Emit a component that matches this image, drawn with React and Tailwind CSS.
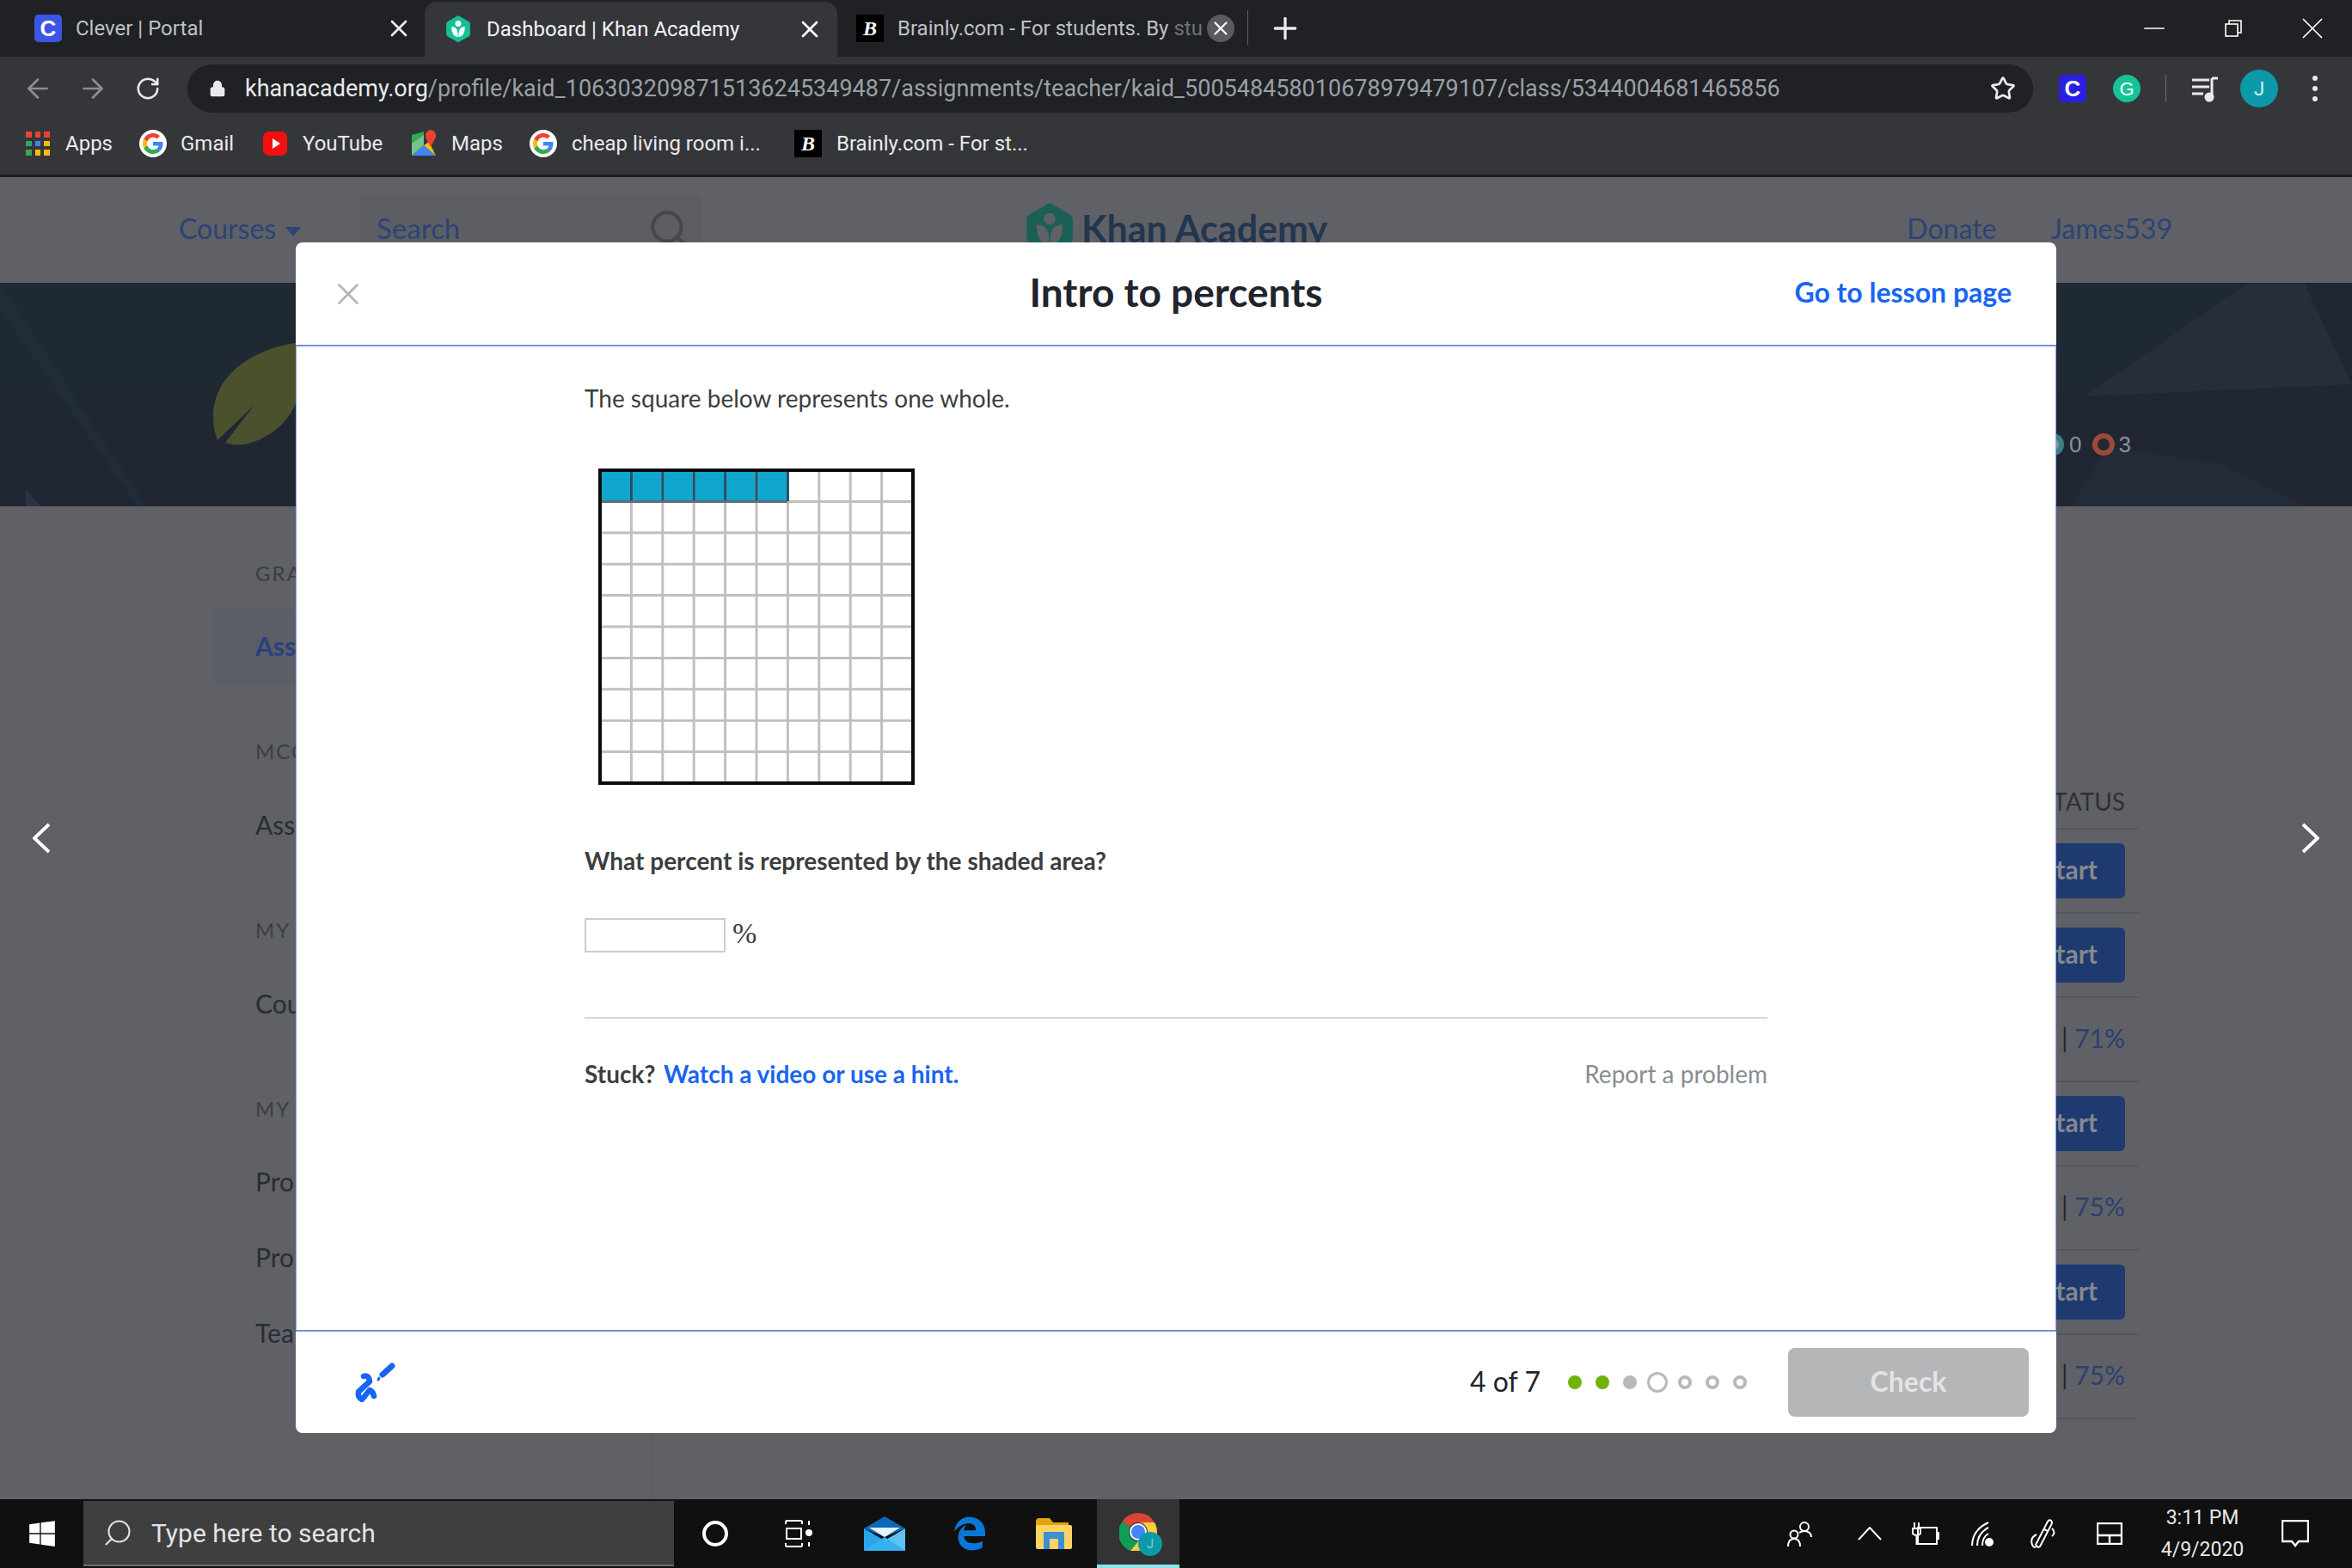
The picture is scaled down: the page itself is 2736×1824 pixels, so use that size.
import { ArrowLeft, ArrowRight, Lock, Minus, Plus, RotateCw, Search, Star, X } from 'lucide-react';
import { FaEdgeLegacy, FaWindows } from 'react-icons/fa';

const UI_FONT = 'font-["Roboto","Liberation_Sans",sans-serif]';

const SIDEBAR = [
    { label: 'MCC', link: 'Ass', gap: 'mt-[45px]' },
    { label: 'MY', link: 'Cou', gap: 'mt-[45px]' },
];

const ROWS = [
    { start: true },
    { start: true },
    { score: '71%' },
    { start: true },
    { score: '75%' },
    { start: true },
    { score: '75%' },
];

const DOTS = ['done', 'done', 'seen', 'current', 'todo', 'todo', 'todo'];

function GoogleIcon({ size = 32 }) {
    return (
        <div className="flex items-center justify-center rounded-full bg-white" style={{ width: size, height: size }}>
            <svg viewBox="0 0 48 48" width={size - 8} height={size - 8}>
                <path fill="#EA4335" d="M24 9.5c3.54 0 6.71 1.22 9.21 3.6l6.85-6.85C35.9 2.38 30.47 0 24 0 14.62 0 6.51 5.38 2.56 13.22l7.98 6.19C12.43 13.72 17.74 9.5 24 9.5z" />
                <path fill="#4285F4" d="M46.98 24.55c0-1.57-.15-3.09-.38-4.55H24v9.02h12.94c-.58 2.96-2.26 5.48-4.78 7.18l7.73 6c4.51-4.18 7.09-10.36 7.09-17.65z" />
                <path fill="#FBBC05" d="M10.53 28.59c-.48-1.45-.76-2.99-.76-4.59s.27-3.14.76-4.59l-7.98-6.19C.92 16.46 0 20.12 0 24c0 3.88.92 7.54 2.56 10.78l7.97-6.19z" />
                <path fill="#34A853" d="M24 48c6.48 0 11.93-2.13 15.89-5.81l-7.73-6c-2.15 1.45-4.92 2.3-8.16 2.3-6.26 0-11.57-4.22-13.47-9.91l-7.98 6.19C6.51 42.62 14.62 48 24 48z" />
            </svg>
        </div>
    );
}

function KhanLogo({ size = 30, color = '#14bf96', leaf = '#ffffff' }) {
    return (
        <svg viewBox="0 0 32 36" width={size} height={size * 1.12}>
            <path fill={color} d="M16 0 L30 8 Q32 9 32 12 L32 24 Q32 27 30 28 L16 36 L2 28 Q0 27 0 24 L0 12 Q0 9 2 8 Z" />
            <path fill={leaf} d="M7 15 Q15 15 15.5 24 L15.5 29 Q7 28 7 15 Z M25 15 Q17 15 16.5 24 L16.5 29 Q25 28 25 15 Z" />
            <circle cx="16" cy="11" r="4" fill={leaf} />
        </svg>
    );
}

function BrainlyIcon() {
    return (
        <div className="flex h-[32px] w-[32px] items-center justify-center bg-black font-['Liberation_Serif',serif] text-[24px] font-bold italic text-white">
            B
        </div>
    );
}

function CleverIcon({ className }) {
    return (
        <div className={`flex h-[32px] w-[32px] items-center justify-center rounded-[5px] font-['Liberation_Sans',sans-serif] text-[26px] font-bold text-white ${className}`}>
            C
        </div>
    );
}

function ChromeLogo() {
    return (
        <div className="relative h-[44px] w-[44px]">
            <svg viewBox="0 0 44 44" width="44" height="44">
                <path fill="#db4437" d="M22 0 A22 22 0 0 1 41 11 L22 11 A11 11 0 0 0 12.5 16.5 L3.5 10 A22 22 0 0 1 22 0 Z" />
                <path fill="#0f9d58" d="M3.5 10 L12.5 16.5 A11 11 0 0 0 22 33 L13 44 A22 22 0 0 1 3.5 10 Z" />
                <path fill="#ffcd40" d="M41 11 A22 22 0 0 1 22 44 L13 44 L22 33 A11 11 0 0 0 22 11 Z" />
                <circle cx="22" cy="22" r="9" fill="#4285f4" stroke="#ffffff" strokeWidth="2" />
            </svg>
            <div className="absolute bottom-[-6px] right-[-6px] flex h-[28px] w-[28px] items-center justify-center rounded-full bg-[#0d9aa8] text-[14px] text-[#7fd4dc]">
                J
            </div>
        </div>
    );
}

function Tabs() {
    return (
        <div className="flex h-[66px] items-end bg-[#202124] text-[24px]">
            {/* Clever */}
            <div className="flex h-[66px] w-[494px] items-center pl-[40px] pr-[14px] text-[#bdc1c6]">
                <CleverIcon className="bg-[#3b55e6]" />
                <span className="ml-[16px]">Clever | Portal</span>
                <X size={32} strokeWidth={2} className="ml-auto text-[#e8eaed]" />
            </div>
            {/* Active tab */}
            <div className="flex h-[64px] w-[480px] items-center rounded-t-[14px] bg-[#35363a] pl-[25px] pr-[16px] text-[#f1f3f4]">
                <KhanLogo size={28} />
                <span className="ml-[19px]">Dashboard | Khan Academy</span>
                <X size={32} strokeWidth={2} className="ml-auto text-white" />
            </div>
            {/* Brainly */}
            <div className="flex h-[66px] w-[477px] items-center pl-[22px] pr-[15px] text-[#bdc1c6]">
                <BrainlyIcon />
                <span className="ml-[16px] whitespace-nowrap">Brainly.com - For students. By <span className="text-[#6f7276]">stu</span></span>
                <div className="ml-auto flex h-[32px] w-[32px] shrink-0 items-center justify-center rounded-full bg-[#5a5b5f]">
                    <X size={26} strokeWidth={2} className="text-white" />
                </div>
            </div>
            <div className="mb-[14px] h-[40px] w-px bg-[#5f6368]" />
            <div className="flex h-[66px] w-[86px] items-center justify-center">
                <Plus size={40} strokeWidth={2} className="text-[#e8eaed]" />
            </div>
            {/* Window buttons */}
            <div className="ml-auto flex h-[66px] items-center text-white">
                <div className="flex w-[90px] justify-center"><Minus size={38} strokeWidth={1.1} /></div>
                <div className="flex w-[93px] justify-center">
                    <svg viewBox="0 0 20 20" width="20" height="20" fill="none" stroke="currentColor" strokeWidth="1.6">
                        <rect x="1" y="5" width="14" height="14" />
                        <path d="M5 5 V1 H19 V15 H15" />
                    </svg>
                </div>
                <div className="flex w-[92px] justify-center"><X size={42} strokeWidth={1} /></div>
            </div>
        </div>
    );
}

function Toolbar() {
    return (
        <div className="flex h-[70px] items-center bg-[#35363a] pt-[4px]">
            <div className="flex w-[76px] justify-center pl-[12px]"><ArrowLeft size={36} strokeWidth={1.8} className="text-[#8b8d91]" /></div>
            <div className="flex w-[64px] justify-center"><ArrowRight size={36} strokeWidth={1.8} className="text-[#8b8d91]" /></div>
            <div className="flex w-[64px] justify-center"><RotateCw size={30} className="text-[#e8eaed]" /></div>
            <div className="ml-[14px] flex h-[56px] w-[2147px] items-center rounded-full bg-[#202124] pl-[25px] pr-[20px]">
                <Lock size={20} fill="#e8eaed" className="text-[#e8eaed]" />
                <span className="ml-[22px] whitespace-nowrap text-[27px] text-[#9aa0a6]">
                    <span className="text-[#e8eaed]">khanacademy.org</span>/profile/kaid_1063032098715136245349487/assignments/teacher/kaid_500548458010678979479107/class/5344004681465856
                </span>
                <Star size={30} strokeWidth={2.2} className="ml-auto shrink-0 text-[#e8eaed]" />
            </div>
            <div className="ml-[30px]"><CleverIcon className="bg-[#2a1fe0]" /></div>
            <div className="ml-[31px] flex h-[32px] w-[32px] items-center justify-center rounded-full bg-[#15c39a] font-['Liberation_Sans',sans-serif] text-[22px] text-white">G</div>
            <div className="ml-[29px] h-[32px] w-px bg-[#6b6e72]" />
            <div className="ml-[29px] text-[#e8eaed]">
                <svg viewBox="0 0 32 32" width="32" height="32" fill="none" stroke="currentColor" strokeWidth="3">
                    <path d="M1 6 H21 M1 14 H21 M1 22 H14 M24 4 V25" />
                    <path d="M24 4 H31" />
                    <circle cx="21" cy="26" r="4" fill="currentColor" />
                </svg>
            </div>
            <div className="ml-[25px] flex h-[44px] w-[44px] items-center justify-center rounded-full bg-[#0d9aa8] text-[22px] text-[#d6f3f6]">J</div>
            <div className="ml-[40px] flex flex-col gap-[6px]">
                <div className="h-[6px] w-[6px] rounded-full bg-[#e8eaed]" />
                <div className="h-[6px] w-[6px] rounded-full bg-[#e8eaed]" />
                <div className="h-[6px] w-[6px] rounded-full bg-[#e8eaed]" />
            </div>
        </div>
    );
}

function Bookmarks() {
    const appColors = ['#ea4335', '#ea4335', '#ea4335', '#34a853', '#4285f4', '#fbbc05', '#34a853', '#fbbc05', '#fbbc05'];
    return (
        <div className="flex h-[70px] items-center border-b-[3px] border-[#1c1d1f] bg-[#35363a] pb-[5px] pl-[30px] text-[24px] text-[#e8eaed]">
            <div className="flex w-[132px] items-center">
                <div className="grid h-[28px] w-[28px] grid-cols-3 gap-[4px]">
                    {appColors.map((color, i) => (
                        <div key={i} style={{ backgroundColor: color }} />
                    ))}
                </div>
                <span className="ml-[18px]">Apps</span>
            </div>
            <div className="flex w-[144px] items-center">
                <GoogleIcon />
                <span className="ml-[16px]">Gmail</span>
            </div>
            <div className="flex w-[173px] items-center">
                <div className="flex h-[28px] w-[28px] items-center justify-center rounded-[7px] bg-[#f40f0f]">
                    <div className="ml-[2px] h-0 w-0 border-y-[6px] border-l-[9px] border-y-transparent border-l-white" />
                </div>
                <span className="ml-[18px]">YouTube</span>
            </div>
            <div className="flex w-[137px] items-center">
                <svg viewBox="0 0 28 32" width="28" height="32">
                    <path fill="#34a853" d="M0 6 L14 2 L14 18 L0 30 Z" />
                    <path fill="#4285f4" d="M0 30 L14 18 L28 30 Z" />
                    <path fill="#fbbc05" d="M14 18 L20 14 L28 30 Z" />
                    <path fill="#f1f3f4" d="M0 16 L14 6 L14 18 L0 30 Z" opacity="0.35" />
                    <path fill="#ea4335" d="M22 0 A6.5 6.5 0 0 1 28 7 C28 11 24 15 22 20 C20 15 16 11 16 7 A6.5 6.5 0 0 1 22 0 Z" />
                </svg>
                <span className="ml-[18px]">Maps</span>
            </div>
            <div className="flex w-[308px] items-center">
                <GoogleIcon />
                <span className="ml-[17px]">cheap living room i...</span>
            </div>
            <BrainlyIcon />
            <span className="ml-[17px]">Brainly.com - For st...</span>
        </div>
    );
}

// Dimmed page behind the dialog
function PageHeader() {
    return (
        <div className="flex h-[123px] items-center pb-[3px] pl-[208px] pr-[209px] font-['Lato',sans-serif] text-[32px] text-[#2c4476]">
            <div className="flex w-[211px] items-center">
                <span>Courses</span>
                <div className="ml-[11px] mt-[6px] h-0 w-0 border-x-[9px] border-t-[11px] border-x-transparent border-t-[#2c4476]" />
            </div>
            <div className="flex h-[80px] w-[398px] items-center rounded-[4px] bg-[#5c5e64] pl-[19px] pr-[14px]">
                <span className="text-[33px]">Search</span>
                <Search size={50} strokeWidth={2} className="ml-auto text-[#45474c]" />
            </div>
            <div className="ml-[377px] flex items-center">
                <KhanLogo size={54} color="#1b5f57" leaf="#5f6167" />
                <span className="ml-[10px] text-[43px] font-bold text-[#24364f]">Khan Academy</span>
            </div>
            <span className="ml-auto">Donate</span>
            <span className="ml-[63px]">James539</span>
        </div>
    );
}

function Hero() {
    return (
        <div className="relative flex h-[260px] items-center bg-[#202733] pl-[2375px] pt-[116px] font-['Liberation_Sans',sans-serif] text-[26px] text-[#8d9096]">
            <svg viewBox="0 0 2736 260" className="absolute inset-0 h-full w-full">
                <path fill="#1e2934" d="M0 0 H2620 L2425 130 H0 Z" />
                <path fill="#262e3c" d="M2615 0 H2680 L2736 118 L2425 132 Z" />
                <path fill="#232b38" d="M2450 190 L2580 210 L2680 260 H2410 Z" />
                <path fill="#202c37" d="M0 0 L170 260 H160 L0 30 Z" />
                <path fill="#2a3342" d="M30 240 L47 260 H30 Z" />
                <path fill="#4b512c" d="M344 70 C290 78 248 110 248 155 C248 168 251 178 253 183 L296 142 L262 186 C270 189 282 190 295 185 C320 176 336 160 344 140 Z" />
            </svg>
            <div className="relative flex h-[26px] w-[26px] items-center justify-center rounded-full bg-[#3f7f8a]">
                <div className="h-[14px] w-[14px] rounded-full bg-[#8b9498]" />
            </div>
            <span className="relative ml-[6px]">0</span>
            <div className="relative ml-[13px] flex h-[26px] w-[26px] items-center justify-center rounded-full bg-[#9b4a38]">
                <div className="h-[14px] w-[14px] rounded-full bg-[#23272f]" />
            </div>
            <span className="relative ml-[4px]">3</span>
        </div>
    );
}

function PageBody() {
    return (
        <div className="flex flex-1 font-['Lato',sans-serif]">
            <div className="w-[760px] border-r border-[#57595e] pl-[297px] pt-[63px] text-[30px] text-[#2a2c33]">
                <div className="text-[24px] leading-[30px] tracking-[2px] text-[#3c3e44]">GRA</div>
                <div className="-ml-[49px] mt-[26px] flex h-[87px] items-center rounded-[6px] bg-[#5b5e66] pl-[49px] font-bold text-[#27427f]">Ass</div>
                {SIDEBAR.map((group, i) => (
                    <div key={group.label}>
                        <div className={`text-[24px] leading-[30px] tracking-[2px] text-[#3c3e44] ${i === 0 ? 'mt-[64px]' : 'mt-[83px]'}`}>{group.label}</div>
                        <div className={`flex h-[50px] items-center ${group.gap}`}>{group.link}</div>
                    </div>
                ))}
                <div className="mt-[83px] text-[24px] leading-[30px] tracking-[2px] text-[#3c3e44]">MY A</div>
                <div className="mt-[25px]">
                    {['Pro', 'Pro', 'Tea'].map((item, i) => (
                        <div key={i} className="flex h-[88px] items-center">{item}</div>
                    ))}
                </div>
            </div>
            <div className="flex-1 pl-[1000px] pr-[248px] pt-[278px]">
                <div className="flex h-[98px] items-end justify-end border-b-2 border-[#55575c] pb-[17px] pr-[16px] text-[28px] leading-[28px] text-[#2f3136]">STATUS</div>
                {ROWS.map((row, i) => (
                    <div key={i} className="flex h-[98px] items-center justify-end border-b-2 border-[#55575c] pr-[16px]">
                        {row.start ? (
                            <div className="flex h-[64px] items-center rounded-[6px] bg-[#1f3a6e] px-[32px] pb-[3px] text-[30px] font-bold text-[#85888e]">Start</div>
                        ) : (
                            <span className="pb-[3px] text-[30px] text-[#2c3f70]"><span className="text-[#25272c]">| </span>{row.score}</span>
                        )}
                    </div>
                ))}
            </div>
        </div>
    );
}

function GridFigure() {
    const lines = [1, 2, 3, 4, 5, 6, 7, 8, 9];
    return (
        <svg viewBox="0 0 368 368" width="368" height="368" className="ml-[16px] mt-[62px] block">
            <rect x="4" y="4" width="216" height="34" fill="#11a6cd" />
            {lines.map((n) => (
                <g key={n}>
                    <line x1={2 + n * 36.4} x2={2 + n * 36.4} y1="4" y2="364" stroke="#c0c0c0" strokeWidth="3" />
                    <line x1="4" x2="364" y1={2 + n * 36.4} y2={2 + n * 36.4} stroke="#c0c0c0" strokeWidth="3" />
                </g>
            ))}
            {[1, 2, 3, 4, 5, 6].map((n) => (
                <line key={n} x1={2 + n * 36.4} x2={2 + n * 36.4} y1="4" y2="38" stroke="#1f5068" strokeWidth="3" />
            ))}
            <line x1="4" x2="220" y1="38.4" y2="38.4" stroke="#5d6f78" strokeWidth="3" />
            <rect x="2" y="2" width="364" height="364" fill="none" stroke="#0c0c0c" strokeWidth="4" />
        </svg>
    );
}

function ScratchpadIcon() {
    return (
        <svg viewBox="0 0 50 50" width="50" height="50" fill="none" stroke="#1865f2" strokeLinecap="round" strokeLinejoin="round">
            <path strokeWidth="6.5" d="M13 18 Q19 16 20 24 L7 36 Q6 43 11 45 L20 34 Q24 36 25 41" />
            <path strokeWidth="7" d="M46 6 L35 16" />
            <path strokeWidth="3" d="M31 20 L30 22" />
        </svg>
    );
}

function Dialog() {
    return (
        <div className="absolute left-[344px] top-[76px] flex h-[1385px] w-[2048px] flex-col rounded-[8px] bg-white font-['Lato',sans-serif]">
            <div className="grid h-[121px] grid-cols-[1fr_auto_1fr] items-center border-b-2 border-[#7391d3] px-[52px] pb-[4px]">
                <X size={42} strokeWidth={1.6} className="-ml-[12px] mt-[4px] text-[#b5b5b5]" />
                <h1 className="text-[46px] font-bold text-[#21242c]">Intro to percents</h1>
                <span className="justify-self-end text-[32px] font-bold text-[#1865f2]">Go to lesson page</span>
            </div>

            <div className="flex-1 border-x border-[#8fa8dd] pl-[335px] pr-[335px] pt-[40px]">
                <p className="text-[28px] leading-[40px] text-[#3b3e40]">The square below represents one whole.</p>
                <GridFigure />
                <p className="mt-[68px] text-[28px] font-bold leading-[40px] text-[#3b3e40]">What percent is represented by the shaded area?</p>
                <div className="mt-[47px] flex h-[40px] items-center">
                    <div className="h-[40px] w-[164px] border-2 border-[#cccccc]" />
                    <span className="mb-[4px] ml-[8px] font-['Liberation_Serif',serif] text-[34px] leading-[40px] text-[#3b3e40]">%</span>
                </div>
                <div className="mt-[75px] h-[2px] bg-[#d6d6d6]" />
                <div className="mt-[44px] flex items-center justify-between text-[28px] leading-[40px]">
                    <p className="font-bold text-[#3b3e40]">
                        Stuck? <span className="ml-[3px] text-[#1865f2]">Watch a video or use a hint.</span>
                    </p>
                    <span className="text-[#888d93]">Report a problem</span>
                </div>
            </div>

            {/* Footer */}
            <div className="flex h-[120px] items-center border-t-2 border-[#7391d3] pl-[66px] pr-[32px]">
                <ScratchpadIcon />
                <span className="ml-auto pb-[3px] text-[32px] text-[#21242c]">4 of 7</span>
                <div className="ml-[24px] flex items-center">
                    {DOTS.map((dot, i) => (
                        <div key={i} className="flex w-[32px] justify-center">
                            {dot === 'done' && <div className="h-[16px] w-[16px] rounded-full bg-[#71b307]" />}
                            {dot === 'seen' && <div className="h-[16px] w-[16px] rounded-full bg-[#b8b9bd]" />}
                            {dot === 'current' && <div className="h-[24px] w-[24px] rounded-full border-[3px] border-[#b8b9bd]" />}
                            {dot === 'todo' && <div className="h-[16px] w-[16px] rounded-full border-[4px] border-[#b8b9bd]" />}
                        </div>
                    ))}
                </div>
                <div className="ml-[40px] flex h-[80px] w-[280px] items-center justify-center rounded-[8px] bg-[#b5b6b8] pb-[3px] text-[32px] font-bold text-[#e3e4e5]">
                    Check
                </div>
            </div>
        </div>
    );
}

function Taskbar() {
    return (
        <div className="flex h-[80px] items-center bg-[#101010] text-white">
            <div className="flex h-full w-[97px] items-center justify-center">
                <FaWindows size={34} />
            </div>
            <div className="flex h-[76px] w-[687px] items-center border-b-[2px] border-[#6a6a6a] bg-[#3f3f3f] pl-[22px] text-[30px] text-[#e4e4e4]">
                <Search size={36} strokeWidth={1.4} className="-scale-x-100" />
                <span className="ml-[21px]">Type here to search</span>
            </div>
            <div className="flex h-full w-[96px] items-center justify-center">
                <div className="h-[30px] w-[30px] rounded-full border-[4px] border-white" />
            </div>
            <div className="flex h-full w-[98px] items-center justify-center">
                <svg viewBox="0 0 32 32" width="32" height="32" fill="none" stroke="white" strokeWidth="2">
                    <path d="M1 1 H20 M1 31 H20 M1 5 V1 M20 5 V1 M1 27 V31 M20 27 V31" />
                    <rect x="2" y="10" width="17" height="12" />
                    <path d="M28 1 V6 M28 26 V31" />
                    <circle cx="28" cy="15" r="3" fill="white" />
                </svg>
            </div>
            <div className="flex h-full w-[102px] items-center justify-center">
                <svg viewBox="0 0 48 40" width="48" height="40">
                    <path fill="#0b6ab8" d="M0 14 L24 0 L48 14 L24 24 Z" />
                    <path fill="#2aa6e8" d="M0 14 L24 28 L0 40 Z" />
                    <path fill="#5cc3f2" d="M48 14 L48 40 L24 28 Z" />
                    <path fill="#33b2ee" d="M0 40 L24 24 L48 40 Z" />
                    <path fill="#e6f1f8" d="M6 13 H42 L24 24 Z" />
                </svg>
            </div>
            <div className="flex h-full w-[96px] items-center justify-center">
                <FaEdgeLegacy size={40} className="text-[#0a78d7]" />
            </div>
            <div className="flex h-full w-[100px] items-center justify-center">
                <svg viewBox="0 0 42 36" width="42" height="36">
                    <path fill="#e5a50a" d="M0 4 Q0 0 4 0 H16 L20 5 H38 V10 H0 Z" />
                    <rect y="8" width="42" height="28" rx="2" fill="#fcd462" />
                    <rect x="9" y="16" width="24" height="20" fill="#3e8fd3" />
                    <rect x="16" y="24" width="10" height="12" fill="#fcd462" />
                </svg>
            </div>
            <div className="flex h-full w-[96px] items-center justify-center border-b-[4px] border-[#8ce4ea] bg-[#333333]">
                <ChromeLogo />
            </div>

            {/* System tray */}
            <div className="ml-auto flex h-full items-center pr-[18px]">
                <div className="flex w-[88px] justify-center">
                    <svg viewBox="0 0 32 32" width="32" height="32" fill="none" stroke="white" strokeWidth="2">
                        <circle cx="21" cy="8" r="5" />
                        <path d="M15 15 Q21 11 27 15 Q29 17 29 20" />
                        <circle cx="9" cy="17" r="4.5" />
                        <path d="M2 31 Q2 22 9 22 Q16 22 16 31" />
                    </svg>
                </div>
                <div className="flex w-[74px] justify-center">
                    <svg viewBox="0 0 28 16" width="28" height="16" fill="none" stroke="white" strokeWidth="2"><path d="M1 15 L14 1 L27 15" /></svg>
                </div>
                <div className="flex w-[56px] justify-center">
                    <svg viewBox="0 0 32 28" width="32" height="28" fill="none" stroke="white" strokeWidth="2">
                        <rect x="7" y="7" width="22" height="19" />
                        <path d="M29 13 H31 V20 H29" />
                        <path d="M3 1 V8 M8 1 V8 M1 8 H10 V14 Q5.5 18 1 14 Z M5.5 16 V27" />
                    </svg>
                </div>
                <div className="flex w-[78px] justify-center">
                    <svg viewBox="0 0 28 30" width="28" height="30" fill="none" stroke="white" strokeWidth="2">
                        <path d="M1 29 Q1 11 20 2 M7 29 Q7 15 20 8 M13 29 Q13 19 20 15" />
                        <circle cx="21" cy="25" r="4" fill="white" />
                    </svg>
                </div>
                <div className="flex w-[60px] justify-center">
                    <svg viewBox="0 0 32 34" width="32" height="34" fill="none" stroke="white" strokeWidth="2">
                        <path d="M8 30 L22 3 Q24 0 26 2 Q28 4 26 7 L13 32 Q10 34 8 30 Z M18 12 L22 14" />
                        <path d="M27 11 Q32 16 27 20 M9 18 Q1 22 4 30 Q5 33 8 33" />
                    </svg>
                </div>
                <div className="flex w-[96px] justify-center">
                    <svg viewBox="0 0 30 26" width="30" height="26" fill="none" stroke="white" strokeWidth="2.4">
                        <rect x="1" y="1" width="28" height="24" />
                        <path d="M1 15 H29 M15 15 V25" />
                    </svg>
                </div>
                <div className="flex w-[120px] flex-col items-center gap-[11px] text-[23px] leading-[26px] text-[#e8e8e8]">
                    <span>3:11 PM</span>
                    <span>4/9/2020</span>
                </div>
                <div className="flex w-[96px] justify-center">
                    <svg viewBox="0 0 32 32" width="32" height="32" fill="none" stroke="white" strokeWidth="2.4">
                        <path d="M1 1 H31 V25 H20 L16 30 L12 25 H1 Z" />
                    </svg>
                </div>
            </div>
        </div>
    );
}

export default function App() {
    return (
        <div className="flex h-[1824px] w-[2736px] flex-col overflow-hidden bg-[#5f6167]">
            <div className={UI_FONT}>
                <Tabs />
                <Toolbar />
                <Bookmarks />
            </div>

            <div className="relative flex min-h-0 flex-1 flex-col">
                <PageHeader />
                <Hero />
                <PageBody />
                <Dialog />
                {/* Carousel arrows */}
                <svg viewBox="0 0 20 36" width="20" height="36" fill="none" stroke="white" strokeWidth="4" className="absolute left-[38px] top-[751px]">
                    <path d="M19 2 L2 18 L19 34" />
                </svg>
                <svg viewBox="0 0 20 36" width="20" height="36" fill="none" stroke="white" strokeWidth="4" className="absolute left-[2678px] top-[751px]">
                    <path d="M1 2 L18 18 L1 34" />
                </svg>
            </div>

            <div className={UI_FONT}>
                <Taskbar />
            </div>
        </div>
    );
}
